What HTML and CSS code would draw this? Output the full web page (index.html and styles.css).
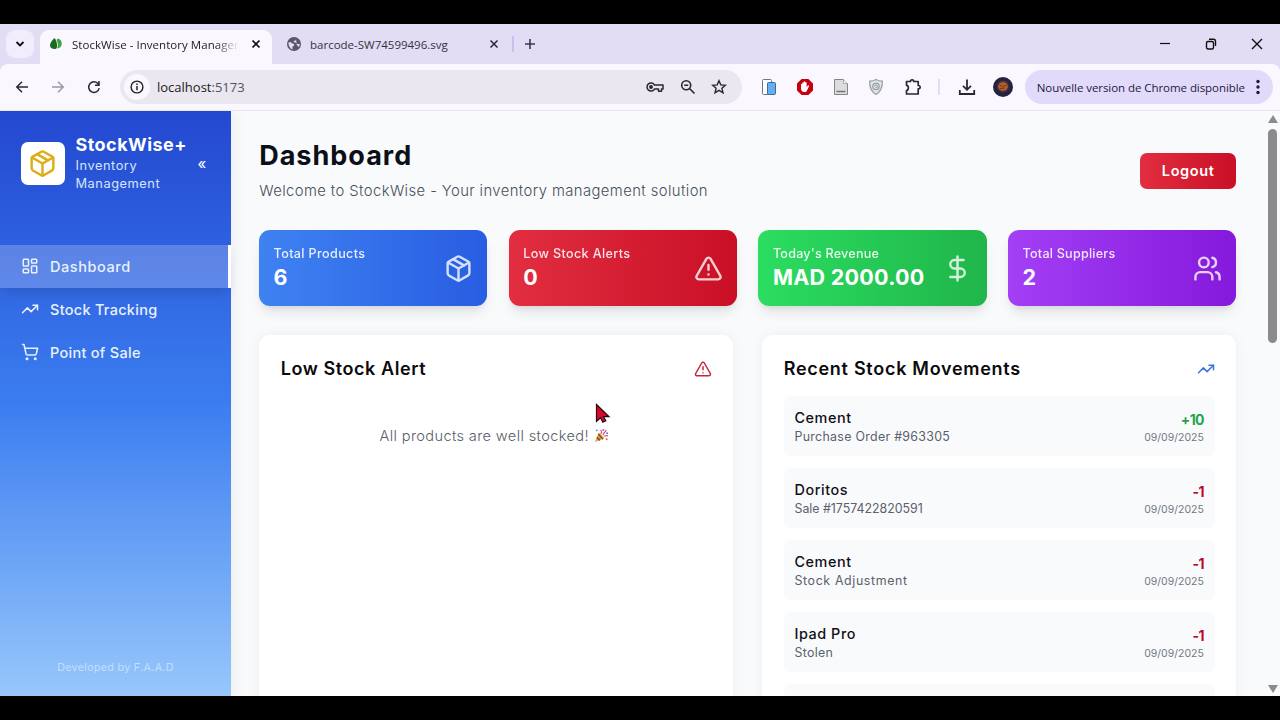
FILE: index.html
```html
<!DOCTYPE html>
<html lang="en">
<head>
  <meta charset="UTF-8">
  <title>StockWise - Inventory Management</title>
  <link rel="stylesheet" href="styles.css">
</head>
<body>

  <!-- Shared icons -->
  <svg class="defs" width="0" height="0">
    <symbol id="box" viewBox="0 0 24 24">
      <path d="m7.5 4.27 9 5.15"/>
      <path d="M21 8a2 2 0 0 0-1-1.73l-7-4a2 2 0 0 0-2 0l-7 4A2 2 0 0 0 3 8v8a2 2 0 0 0 1 1.73l7 4a2 2 0 0 0 2 0l7-4A2 2 0 0 0 21 16Z"/>
      <path d="m3.3 7 8.7 5 8.7-5M12 22V12"/>
    </symbol>
    <symbol id="alert" viewBox="0 0 24 24">
      <path d="m21.73 18-8-14a2 2 0 0 0-3.48 0l-8 14A2 2 0 0 0 4 21h16a2 2 0 0 0 1.73-3Z"/>
      <path d="M12 9v4M12 17h.01"/>
    </symbol>
    <symbol id="trend" viewBox="0 0 24 24">
      <path d="m22 7-8.5 8.5-5-5L2 17"/>
      <path d="M16 7h6v6"/>
    </symbol>
  </svg>

  <div class="browser">
    <div class="tabs">
      <div class="tab-search">
        <svg width="10" height="10" viewBox="0 0 10 10"><path d="m1.5 3 3.5 3.500L8.500 3" fill="none" stroke="#111" stroke-width="1.8"/></svg>
      </div>
      <div class="tab active">
        <svg class="favicon" width="14" height="14" viewBox="0 0 14 14">
          <path d="M5.500 1C2.500 4 1 6 1 8.500 1 10.800 3 12 5.500 12S8 10.500 8 8.200C8 5.500 7 3 5.500 1Z" fill="#146b25"/>
          <path d="M9 1.500c3 1 4 3 3.700 5.500C12.500 9.500 11 11.200 8.300 11.500 9.300 8 8.700 5 7.500 3Z" fill="#43a047"/>
        </svg>
        <span class="tab-title fade">StockWise - Inventory Manager</span>
        <svg class="close" width="10" height="10" viewBox="0 0 10 10"><path d="m1.5 1.5 7 7m0-7-7 7" stroke="#111" stroke-width="1.7"/></svg>
      </div>
      <div class="tab">
        <svg class="favicon" width="16" height="16" viewBox="0 0 16 16">
          <circle cx="8" cy="8" r="7" fill="#5b5769"/>
          <path d="M2.500 6.200h2.200c1 0 .8 1.400 1.900 1.400 1.500 0 1.600 1 1.600 1.700 0 1-1.700.5-1.700 1.700v2.500C3.800 12.600 2.300 9.500 2.500 6.200ZM10 2.700c0 1.800-.6 2-1.800 2-1.300 0-.4 1.700.8 1.700 1.500 0 1.300 1.600 2.500 1.600h2.200c0 1.200-.3 2-.9 3-.9-.5-.8-1.700-2-1.700" fill="#e2dcf5"/>
        </svg>
        <span class="tab-title">barcode-SW74599496.svg</span>
        <svg class="close" width="10" height="10" viewBox="0 0 10 10"><path d="m1.5 1.5 7 7m0-7-7 7" stroke="#2b2638" stroke-width="1.5"/></svg>
      </div>
      <div class="tab-sep"></div>
      <svg class="new-tab" width="12" height="12" viewBox="0 0 12 12"><path d="M6 1v10M1 6h10" stroke="#3c364b" stroke-width="1.6"/></svg>
      <div class="window-buttons">
        <svg width="12" height="12" viewBox="0 0 12 12"><path d="M1 5.500h10" stroke="#111" stroke-width="1.2"/></svg>
        <svg width="12" height="12" viewBox="0 0 12 12" fill="none" stroke="#111" stroke-width="1.4"><rect x="1.5" y="3.5" width="7" height="7.5" rx="1.5"/><path d="M4 1.300h4.500a2 2 0 0 1 2 2V8"/></svg>
        <svg width="12" height="12" viewBox="0 0 12 12"><path d="m1 1 10 10m0-10L1 11" stroke="#111" stroke-width="1.4"/></svg>
      </div>
    </div>

    <div class="toolbar">
      <div class="nav-buttons">
        <svg width="14" height="14" viewBox="0 0 14 14"><path d="M13 7H2m5-5.200L1.800 7 7 12.200" fill="none" stroke="#2a2733" stroke-width="1.5"/></svg>
        <svg width="14" height="14" viewBox="0 0 14 14"><path d="M1 7h11M7 1.800 12.200 7 7 12.200" fill="none" stroke="#9b99a4" stroke-width="1.5"/></svg>
        <svg width="14" height="14" viewBox="0 0 14 14"><path d="M12.200 8.200A5.300 5.300 0 1 1 11.300 4M12 1v4.200H8" fill="none" stroke="#2a2733" stroke-width="1.5"/></svg>
      </div>
      <div class="address">
        <div class="info">
          <svg width="14" height="14" viewBox="0 0 14 14"><circle cx="7" cy="7" r="5.9" fill="none" stroke="#222" stroke-width="1.4"/><path d="M7 6v4.200M7 3.600v1.500" stroke="#222" stroke-width="1.5"/></svg>
        </div>
        <span class="url">localhost<span>:5173</span></span>
        <svg width="20" height="14" viewBox="0 0 20 14" fill="none" stroke="#2a2733" stroke-width="1.5"><path d="M9.500 5H18v4h-1.500v2.200h-3V9h-4a4 4 0 1 1 0-4Z" stroke-linejoin="round"/><circle cx="6" cy="7" r="1.2" fill="#2a2733"/></svg>
        <svg width="16" height="16" viewBox="0 0 16 16" fill="none" stroke="#2a2733" stroke-width="1.6"><circle cx="6.2" cy="6.2" r="4.5"/><path d="m9.500 9.500 5 5M4.200 6.200h4"/></svg>
        <svg width="16" height="16" viewBox="0 0 16 16"><path d="m8 1.700 1.800 4.200 4.600.4-3.500 3 1.100 4.500L8 11.400l-4 2.400 1.100-4.500-3.500-3 4.600-.4Z" fill="none" stroke="#2a2733" stroke-width="1.4"/></svg>
      </div>
      <div class="extensions">
        <svg width="16" height="18" viewBox="0 0 16 18"><rect x="1.5" y="1.5" width="9" height="15" rx="1" fill="#fff" stroke="#6c7680"/><rect x="6.5" y="4.5" width="8" height="12" rx="1" fill="#65aff5" stroke="#3d6c9e"/></svg>
        <svg width="18" height="18" viewBox="0 0 18 18"><path d="M5.600 1h6.800L17 5.600v6.800L12.400 17H5.600L1 12.400V5.600Z" fill="#c5000f"/><path d="M5 10V6.500c0-1 1.300-1 1.300 0V5c0-1 1.400-1 1.400 0V4c0-1 1.500-1 1.500 0v.8c0-1 1.400-1 1.400 0V9l1-1.300c.8-.8 1.700-.2 1.300.7L11 12.500c-.5 1-1.200 1.500-2.500 1.500C6 14 5 12.500 5 10Z" fill="#fff"/></svg>
        <svg width="16" height="18" viewBox="0 0 16 18"><path d="M1.500 1.500h9l4 4v11h-13Z" fill="#dcdcdc" stroke="#858585"/><path d="M10.500 1.500v4h4" fill="#f7f7f7" stroke="#aaa"/><path d="M3.500 13.500h9" stroke="#777" stroke-width="1.5"/></svg>
        <svg width="16" height="18" viewBox="0 0 16 18"><path d="M8 1.500c2 1.200 4 1.600 6.300 1.600.2 6-1 10.500-6.300 13.200C2.700 13.600 1.500 9.100 1.700 3.100 4 3.100 6 2.700 8 1.500Z" fill="#e3e6e8" stroke="#9aa2a6" stroke-width="1.3"/><circle cx="8" cy="8.4" r="3.2" fill="none" stroke="#9aa2a6" stroke-width="1.3"/><path d="M6.500 8.500c0-2 3-2 3 0s-2 1.500-1.500.3" fill="none" stroke="#899196"/></svg>
        <svg width="18" height="18" viewBox="0 0 18 18"><path d="M2.500 3.500h4c-.2-2.300 3.400-2.300 3.200 0h4.500v4c2.600-.1 2.600 3.500 0 3.400V16H2.500v-3.500c2.500-.4 2.500-5 0-5.200Z" fill="none" stroke="#2a2733" stroke-width="1.7" stroke-linejoin="round"/></svg>
      </div>
      <div class="toolbar-sep"></div>
      <svg class="download" width="18" height="18" viewBox="0 0 18 18"><path d="M9 1.500v10M5 7.800l4 4 4-4M1.800 12v4h14.400v-4" fill="none" stroke="#2a2733" stroke-width="1.8"/></svg>
      <svg class="avatar" width="20" height="20" viewBox="0 0 20 20"><circle cx="10" cy="10" r="10" fill="#24223f"/><circle cx="10" cy="9.5" r="6" fill="#513044"/><ellipse cx="10" cy="9.5" rx="4.8" ry="4.2" fill="#b4602c"/><path d="m6.500 8 3 1.500L13.500 8M7 11.500l5-.5" fill="none" stroke="#70381f"/></svg>
      <div class="update">
        <span>Nouvelle version de Chrome disponible</span>
        <svg width="4" height="16" viewBox="0 0 4 16" fill="#211a35"><circle cx="2" cy="2.5" r="1.7"/><circle cx="2" cy="8" r="1.7"/><circle cx="2" cy="13.5" r="1.7"/></svg>
      </div>
    </div>

    <div class="page">
      <aside class="sidebar">
        <div class="brand">
          <div class="logo"><svg class="icon" width="29" height="29"><use href="#box"/></svg></div>
          <div class="brand-text">
            <div class="brand-name">StockWise+</div>
            <div class="brand-sub">Inventory<br>Management</div>
          </div>
          <span class="collapse">«</span>
        </div>
        <nav>
          <a class="nav-item current">
            <svg class="icon" width="18" height="18" viewBox="0 0 24 24"><rect x="3" y="3" width="7" height="9" rx="1"/><rect x="14" y="3" width="7" height="5" rx="1"/><rect x="14" y="12" width="7" height="9" rx="1"/><rect x="3" y="16" width="7" height="5" rx="1"/></svg>
            <span class="wide">Dashboard</span>
          </a>
          <a class="nav-item">
            <svg class="icon" width="18" height="18"><use href="#trend"/></svg>
            <span>Stock Tracking</span>
          </a>
          <a class="nav-item">
            <svg class="icon" width="18" height="18" viewBox="0 0 24 24"><circle cx="8" cy="21" r="1"/><circle cx="19" cy="21" r="1"/><path d="M2.050 2.050h2l2.660 12.420a2 2 0 0 0 2 1.580h9.780a2 2 0 0 0 1.950-1.570l1.650-7.430H5.120"/></svg>
            <span>Point of Sale</span>
          </a>
        </nav>
        <div class="credit">Developed by F.A.A.D</div>
      </aside>

      <main>
        <header>
          <div>
            <h1>Dashboard</h1>
            <p>Welcome to StockWise - Your inventory management solution</p>
          </div>
          <button class="logout">Logout</button>
        </header>

        <section class="stats">
          <div class="stat blue">
            <div><div class="label">Total Products</div><div class="value">6</div></div>
            <svg class="icon" width="29" height="29"><use href="#box"/></svg>
          </div>
          <div class="stat red">
            <div><div class="label">Low Stock Alerts</div><div class="value">0</div></div>
            <svg class="icon" width="29" height="29"><use href="#alert"/></svg>
          </div>
          <div class="stat green">
            <div><div class="label tight">Today's Revenue</div><div class="value">MAD 2000.00</div></div>
            <svg class="icon" width="29" height="29" viewBox="0 0 24 24"><path d="M12 2v20M17 5H9.500a3.500 3.500 0 0 0 0 7h5a3.500 3.500 0 0 1 0 7H6"/></svg>
          </div>
          <div class="stat purple">
            <div><div class="label tight">Total Suppliers</div><div class="value">2</div></div>
            <svg class="icon" width="29" height="29" viewBox="0 0 24 24"><path d="M16 21v-2a4 4 0 0 0-4-4H6a4 4 0 0 0-4 4v2M22 21v-2a4 4 0 0 0-3-3.870M16 3.130a4 4 0 0 1 0 7.750"/><circle cx="9" cy="7" r="4"/></svg>
          </div>
        </section>

        <section class="panels">
          <div class="panel">
            <div class="panel-head">
              <h2>Low Stock Alert</h2>
              <svg class="icon red-icon" width="18" height="18"><use href="#alert"/></svg>
            </div>
            <p class="empty">
              <span>All products are well stocked!</span>
              <svg width="15" height="15" viewBox="0 0 16 16"><path d="m1 15 4-10c2 1 5 4 6 6Z" fill="#e6a42f"/><path d="m3 10 3.500 3.200M4.500 6.500l5 5.500" stroke="#775434" stroke-width="1.5"/><path d="M7 6c2-1 1-3 0-4M9.500 7.500C11 4 12 5 13 2M11 9c1-1.500 2.500-1 4-.5" fill="none" stroke="#db5b86" stroke-width="1.4"/><circle cx="3" cy="2.5" r="1" fill="#408be0"/><circle cx="10" cy="2" r="1" fill="#8155bd"/><circle cx="14" cy="5.5" r="1.1" fill="#408be0"/><circle cx="13.5" cy="12" r="1" fill="#e65542"/></svg>
            </p>
          </div>

          <div class="panel">
            <div class="panel-head">
              <h2 class="wide">Recent Stock Movements</h2>
              <svg class="icon blue-icon" width="18" height="18"><use href="#trend"/></svg>
            </div>
            <div class="movements">
              <div class="movement">
                <div><div class="name">Cement</div><div class="reason">Purchase Order #963305</div></div>
                <div class="right"><div class="qty plus">+10</div><div class="date">09/09/2025</div></div>
              </div>
              <div class="movement">
                <div><div class="name">Doritos</div><div class="reason digits">Sale #1757422820591</div></div>
                <div class="right"><div class="qty">-1</div><div class="date">09/09/2025</div></div>
              </div>
              <div class="movement">
                <div><div class="name">Cement</div><div class="reason wide">Stock Adjustment</div></div>
                <div class="right"><div class="qty">-1</div><div class="date">09/09/2025</div></div>
              </div>
              <div class="movement">
                <div><div class="name">Ipad Pro</div><div class="reason">Stolen</div></div>
                <div class="right"><div class="qty">-1</div><div class="date">09/09/2025</div></div>
              </div>
              <div class="movement"></div>
            </div>
          </div>
        </section>
      </main>

      <div class="scrollbar">
        <div class="arrow up"></div>
        <div class="thumb"></div>
        <div class="arrow down"></div>
      </div>
    </div>
  </div>

  <svg class="cursor" width="16" height="22" viewBox="0 0 16 22"><path d="M1.500 1.500v17l4-3.700 2.300 4.400 3-1.500-2.300-4H14Z" fill="#d5082f" stroke="#29070e" stroke-width="1.2"/></svg>

</body>
</html>
```
FILE: styles.css
```css
* {
  box-sizing: border-box;
}
body {
  margin: 0;
  height: 720px;
  padding: 24px 0;
  background: #000;
  font-family: Inter, sans-serif;
  overflow: hidden;
}
svg {
  display: block;
  flex-shrink: 0;
}
.defs {
  position: absolute;
}
.icon {
  fill: none;
  stroke: currentColor;
  stroke-width: 2;
  stroke-linecap: round;
  stroke-linejoin: round;
}
.browser {
  height: 672px;
  display: flex;
  flex-direction: column;
  background: #e2dcf5;
}

/* browser tabs */
.tabs {
  height: 40px;
  display: flex;
  align-items: center;
  padding-left: 6px;
  font-family: "Open Sans", sans-serif;
  font-size: 11.5px;
  color: #37323f;
}
.tab-search {
  width: 28px;
  height: 28px;
  border-radius: 9px;
  background: #f1edfc;
  display: flex;
  align-items: center;
  justify-content: center;
  margin-right: 6px;
}
.tab {
  width: 232px;
  height: 34px;
  display: flex;
  align-items: center;
  padding-left: 14px;
  margin-top: 6px;
  padding-bottom: 6px;
}
.tab.active {
  background: #faf7fe;
  border-radius: 9px 9px 0 0;
  padding-left: 9px;
  color: #222;
}
.favicon {
  margin-right: 8px;
}
.active .favicon {
  margin-right: 9px;
}
.tab-title {
  width: 167px;
  white-space: nowrap;
  padding-top: 1px;
}
.tab:not(.active) .tab-title {
  width: 179px;
}
.tab.active .close {
  margin-left: 12px;
}
.fade {
  -webkit-mask-image: linear-gradient(to right, #000 86%, transparent);
  letter-spacing: 0.04px;
}
.tab-sep {
  width: 2px;
  height: 16px;
  background: #cbbff2;
  margin-left: 8px;
}
.new-tab {
  margin-left: 10px;
}
.window-buttons {
  margin-left: auto;
  display: flex;
  gap: 34px;
  padding-right: 17px;
}

/* toolbar */
.toolbar {
  height: 47px;
  display: flex;
  align-items: center;
  background: #faf7fe;
  border-bottom: 1px solid #e8e4f0;
  border-radius: 8px 8px 0 0;
  padding: 0 7px 0 15px;
  font-family: "Open Sans", sans-serif;
}
.nav-buttons {
  display: flex;
  gap: 22px;
}
.address {
  width: 622px;
  height: 34px;
  margin-left: 19px;
  border-radius: 17px;
  background: #eae7f0;
  display: flex;
  align-items: center;
  padding: 0 15px 0 4px;
}
.address > svg {
  margin-left: 15px;
}
.address > .url + svg {
  margin-left: 0;
}
.info {
  width: 26px;
  height: 26px;
  border-radius: 50%;
  background: #faf7fe;
  display: flex;
  align-items: center;
  justify-content: center;
}
.url {
  font-size: 13px;
  color: #1d1b20;
  margin-left: 7px;
  margin-right: auto;
}
.url span {
  color: #55525c;
}
.extensions {
  display: flex;
  align-items: center;
  gap: 19.3px;
  margin-left: 18.5px;
}
.toolbar-sep {
  width: 2px;
  height: 16px;
  background: #e2dcf5;
  margin: 0 18px 0 16px;
}
.avatar {
  margin: 0 12px 0 17px;
}
.update {
  flex: 1;
  height: 34px;
  border-radius: 17px;
  background: #e2dafb;
  display: flex;
  align-items: center;
  justify-content: space-between;
  padding: 0 13px 0 12px;
  font-size: 11.5px;
  letter-spacing: -0.06px;
  color: #221b39;
  white-space: nowrap;
}

/* app */
.page {
  flex: 1;
  min-height: 0;
  display: flex;
  background: #f9fafc;
  overflow: hidden;
}
.sidebar {
  width: 231px;
  display: flex;
  flex-direction: column;
  background: linear-gradient(to bottom, #2348d0, #3b7df0 50%, #97c7fb);
  color: #fff;
  box-shadow: 0 0 16px rgba(0,0,0,0.08);
}
.brand {
  display: flex;
  align-items: center;
  height: 105px;
  padding-left: 21px;
}
.logo {
  width: 43.5px;
  height: 43.5px;
  border-radius: 7px;
  background: #fff;
  color: #dcae12;
  display: flex;
  align-items: center;
  justify-content: center;
}
.brand-text {
  width: 122px;
  margin-left: 11px;
}
.brand-name {
  font-size: 18px;
  line-height: 22px;
  font-weight: 700;
  letter-spacing: 0.45px;
}
.brand-sub {
  font-size: 12.8px;
  line-height: 18px;
  letter-spacing: 0.55px;
  padding-top: 1px;
  color: #d6e5fc;
}
.collapse {
  font-size: 15px;
}
nav {
  margin-top: 29px;
}
.nav-item {
  height: 43px;
  display: flex;
  align-items: center;
  gap: 11px;
  padding: 0 0 1px 21px;
  font-size: 14.5px;
  font-weight: 500;
  letter-spacing: 0.28px;
  color: #e8f2ff;
}
.nav-item .wide {
  letter-spacing: 0.56px;
}
.nav-item.current {
  background: rgba(255,255,255,0.22);
  border-right: 3.6px solid #fff;
  box-shadow: 0 8px 12px -3px rgba(0,0,0,0.12);
}
.credit {
  margin-top: auto;
  padding-bottom: 21px;
  text-align: center;
  font-size: 10.8px;
  line-height: 14px;
  letter-spacing: 0.27px;
  color: #c4defe;
}

main {
  flex: 1;
  padding: 28.8px 28.8px 0 28.2px;
}
header {
  display: flex;
  align-items: center;
  justify-content: space-between;
  height: 62px;
}
h1 {
  margin: 0;
  font-size: 27px;
  line-height: 32px;
  letter-spacing: 1px;
  color: #0b0f17;
}
header p {
  margin: 8px 0 0;
  font-size: 14.8px;
  line-height: 22px;
  font-weight: 300;
  letter-spacing: 0.42px;
  color: #464e59;
}
.logout {
  width: 96px;
  height: 36px;
  border: none;
  border-radius: 7px;
  background: linear-gradient(to right, #e22e40, #c90f26);
  color: #fff;
  font-family: inherit;
  font-size: 14.5px;
  font-weight: 600;
  letter-spacing: 0.65px;
}
.stats {
  display: grid;
  grid-template-columns: repeat(4, 1fr);
  gap: 21.6px;
  margin-top: 28.4px;
}
.stat {
  height: 76px;
  border-radius: 11px;
  padding: 0 14.4px;
  display: flex;
  align-items: center;
  justify-content: space-between;
  color: #fff;
  box-shadow: 0 9px 13px -3px rgba(0,0,0,0.1), 0 4px 6px -4px rgba(0,0,0,0.1);
}
.stat .icon {
  opacity: 0.8;
}
.blue {
  background: linear-gradient(to right, #3f82f2, #285de2);
}
.red {
  background: linear-gradient(to right, #e22e40, #c90f26);
}
.green {
  background: linear-gradient(to right, #2bdd60, #20b54a);
}
.purple {
  background: linear-gradient(to right, #a33ff5, #8519dc);
}
.label {
  font-size: 12.6px;
  line-height: 18px;
  font-weight: 500;
  letter-spacing: 0.36px;
  opacity: 0.88;
}
.label.tight {
  letter-spacing: 0.22px;
}
.value {
  font-size: 21.5px;
  line-height: 29px;
  font-weight: 700;
  letter-spacing: 0.27px;
}
.panels {
  display: grid;
  grid-template-columns: 1fr 1fr;
  gap: 28.8px;
  margin-top: 28.8px;
}
.panel {
  height: 480px;
  padding: 21.6px;
  border-radius: 11px;
  background: #fff;
  box-shadow: 0 0 13px rgba(0,0,0,0.05);
}
.panel-head {
  display: flex;
  align-items: center;
  justify-content: space-between;
  height: 25px;
}
h2 {
  margin: 0;
  padding-bottom: 2px;
  font-size: 18px;
  font-weight: 600;
  letter-spacing: 0.56px;
  color: #0b0b0e;
}
h2.wide {
  letter-spacing: 0.72px;
}
.red-icon {
  color: #c4243e;
}
.blue-icon {
  color: #3d76dd;
}
.empty {
  display: flex;
  align-items: center;
  justify-content: center;
  gap: 5px;
  margin: 43px 4px 0 0;
  font-size: 14.6px;
  line-height: 22px;
  font-weight: 300;
  letter-spacing: 0.36px;
  color: #59606a;
}
.movements {
  display: flex;
  flex-direction: column;
  gap: 11.5px;
  margin-top: 14px;
}
.movement {
  height: 60.5px;
  flex-shrink: 0;
  display: flex;
  align-items: center;
  justify-content: space-between;
  padding: 2px 10.8px 0;
  border-radius: 7px;
  background: #f9fafc;
}
.name {
  font-size: 14.4px;
  line-height: 20px;
  font-weight: 500;
  letter-spacing: 0.55px;
  color: #101014;
}
.reason {
  font-size: 12.4px;
  line-height: 18px;
  letter-spacing: 0.3px;
  color: #59616c;
}
.reason.digits {
  letter-spacing: -0.02px;
}
.reason.wide {
  letter-spacing: 0.62px;
}
.right {
  text-align: right;
}
.qty {
  font-size: 14px;
  line-height: 21px;
  font-weight: 700;
  letter-spacing: -0.66px;
  color: #b8082b;
}
.qty.plus {
  color: #25a44b;
}
.date {
  font-size: 10.5px;
  line-height: 15px;
  color: #737983;
}

.scrollbar {
  width: 15px;
  display: flex;
  flex-direction: column;
  align-items: center;
  padding: 4px 0 3px;
}
.thumb {
  width: 9px;
  height: 214px;
  margin-top: 6px;
  border-radius: 5px;
  background: #8b8b8d;
}
.arrow {
  border: 5px solid transparent;
}
.arrow.up {
  border-top-width: 0;
  border-bottom: 8px solid #8b8b8d;
}
.arrow.down {
  border-bottom-width: 0;
  border-top: 8px solid #8b8b8d;
  margin-top: auto;
}

/* mouse pointer over the page */
.cursor {
  position: absolute;
  left: 595px;
  top: 403px;
}
```
